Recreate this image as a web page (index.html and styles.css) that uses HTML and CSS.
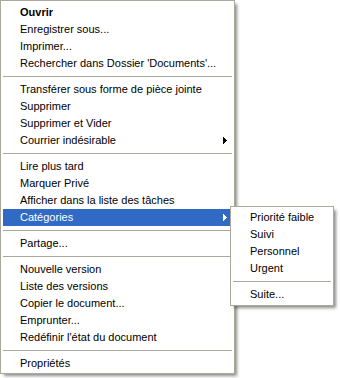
FILE: index.html
```html
<!DOCTYPE html>
<html lang="fr">
<head>
<meta charset="utf-8">
<title>Menu</title>
<link rel="stylesheet" href="styles.css">
</head>
<body>
<div class="stage">
  <div class="menu main">
    <div class="item bold">Ouvrir</div>
    <div class="item">Enregistrer sous...</div>
    <div class="item">Imprimer...</div>
    <div class="item">Rechercher dans Dossier 'Documents'...</div>
    <div class="sep"></div>
    <div class="item">Transférer sous forme de pièce jointe</div>
    <div class="item">Supprimer</div>
    <div class="item">Supprimer et Vider</div>
    <div class="item">Courrier indésirable<svg class="arrow" width="4" height="7" viewBox="0 0 4 7"><path d="M0 0h1v1h1v1h1v1h1v1h-1v1h-1v1h-1v1h-1z"/></svg></div>
    <div class="sep"></div>
    <div class="item">Lire plus tard</div>
    <div class="item">Marquer Privé</div>
    <div class="item">Afficher dans la liste des tâches</div>
    <div class="item active">Catégories<svg class="arrow" width="4" height="7" viewBox="0 0 4 7"><path d="M0 0h1v1h1v1h1v1h1v1h-1v1h-1v1h-1v1h-1z"/></svg></div>
    <div class="sep"></div>
    <div class="item">Partage...</div>
    <div class="sep"></div>
    <div class="item">Nouvelle version</div>
    <div class="item">Liste des versions</div>
    <div class="item">Copier le document...</div>
    <div class="item">Emprunter...</div>
    <div class="item">Redéfinir l'état du document</div>
    <div class="sep"></div>
    <div class="item">Propriétés</div>
  </div>
  <div class="menu sub">
    <div class="item">Priorité faible</div>
    <div class="item">Suivi</div>
    <div class="item">Personnel</div>
    <div class="item">Urgent</div>
    <div class="sep"></div>
    <div class="item">Suite...</div>
  </div>
</div>
</body>
</html>
```
FILE: styles.css
```css
html, body {
  margin: 0;
  padding: 0;
  background: #ffffff;
}

.stage {
  position: relative;
  width: 340px;
  height: 378px;
  font-family: "Liberation Sans", Arial, sans-serif;
  font-size: 11px;
  color: #000000;
}

.menu {
  box-sizing: border-box;
  background: #ffffff;
  border: 1px solid #aca899;
  box-shadow: 3px 3px 3px -1px rgba(0, 0, 0, 0.45);
}

.main {
  width: 235px;
  padding: 3px 2px 1px 2px;
}

.sub {
  position: absolute;
  left: 230px;
  top: 206px;
  width: 104px;
  padding: 2px 2px 2px 2px;
}

.item {
  height: 17px;
  line-height: 17px;
  padding-left: 17px;
  padding-right: 5px;
  display: flex;
  align-items: center;
  justify-content: space-between;
  white-space: nowrap;
}

.bold {
  font-weight: bold;
}

.active {
  background: #316ac5;
  color: #ffffff;
}

.arrow {
  display: block;
  fill: #000000;
  shape-rendering: crispEdges;
}

.active .arrow {
  fill: #ffffff;
}

.sep {
  height: 9px;
  display: flex;
  align-items: center;
}

.sep::before {
  content: "";
  display: block;
  width: 100%;
  height: 1px;
  background: #aca899;
}
```
